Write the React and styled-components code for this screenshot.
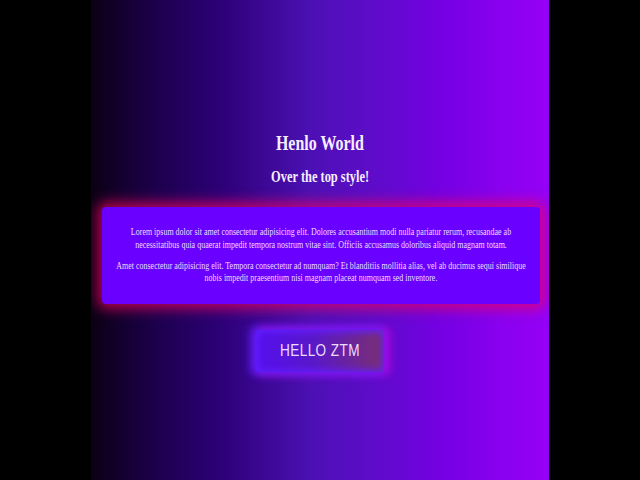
import React from 'react';
import styled, { createGlobalStyle } from 'styled-components';

const GlobalStyle = createGlobalStyle`
  html, body {
    margin: 0;
    padding: 0;
    background: #000;
  }
  body {
    font-family: "Liberation Serif", "Times New Roman", serif;
  }
`;

const Page = styled.div`
  width: 458px;
  height: 480px;
  margin: 0 auto;
  box-sizing: border-box;
  padding-top: 131px;
  background: linear-gradient(
    90deg,
    #0c0014 0%,
    #1c004c 14%,
    #2c0076 28%,
    #4c10b4 48%,
    #5e0cca 62%,
    #7400e2 76%,
    #8a00f0 90%,
    #9600f6 100%
  );
  display: flex;
  flex-direction: column;
  align-items: center;
  overflow: hidden;
`;

const Squeeze = styled.div`
  display: flex;
  justify-content: center;
  width: 100%;
`;

const Title = styled.h1`
  margin: 0;
  flex-shrink: 0;
  font-size: 21px;
  line-height: 24px;
  font-weight: 700;
  color: #f6eeff;
  white-space: nowrap;
  transform: scaleX(0.76);
`;

const Subtitle = styled.h2`
  margin: 12px 0 0;
  flex-shrink: 0;
  font-size: 17px;
  line-height: 20px;
  font-weight: 700;
  color: #f6eeff;
  white-space: nowrap;
  transform: scaleX(0.73);
`;

const Card = styled.section`
  align-self: stretch;
  margin: 20px 9px 0 11px;
  padding: 18px 0 20px;
  background: #6a00ff;
  border-radius: 4px;
  box-shadow: 0 0 13px 5px rgba(235, 0, 95, 0.72);
`;

const Text = styled.p`
  margin: 0 0 ${(p) => p.$gap || 0}px;
  flex-shrink: 0;
  width: 578px;
  font-size: 11px;
  line-height: 12.5px;
  color: #eadcff;
  text-align: center;
  transform: scaleX(0.725);
`;

const Button = styled.button`
  margin-top: 26px;
  width: 128px;
  height: 42px;
  border: none;
  border-radius: 2px;
  background: linear-gradient(90deg, #5410ee 0%, #5a18c8 45%, #7a3070 100%);
  box-shadow:
    -3px 0 8px 3px rgba(90, 30, 255, 0.85),
    3px 0 8px 3px rgba(200, 10, 220, 0.8),
    inset 0 0 6px 3px rgba(100, 30, 255, 0.8);
  color: #eadcff;
  font-family: "Liberation Sans", Arial, sans-serif;
  font-size: 17px;
  letter-spacing: 0.5px;
  cursor: pointer;
`;

const ButtonLabel = styled.span`
  display: inline-block;
  transform: scaleX(0.8);
  white-space: nowrap;
`;

function App() {
  return (
    <>
      <GlobalStyle />
      <Page>
        <Squeeze>
          <Title>Henlo World</Title>
        </Squeeze>
        <Squeeze>
          <Subtitle>Over the top style!</Subtitle>
        </Squeeze>
        <Card>
          <Squeeze>
            <Text $gap={8.5}>
              Lorem ipsum dolor sit amet consectetur adipisicing elit. Dolores accusantium modi nulla pariatur rerum, recusandae ab necessitatibus quia quaerat impedit tempora nostrum vitae sint. Officiis accusamus doloribus aliquid magnam totam.
            </Text>
          </Squeeze>
          <Squeeze>
            <Text>
              Amet consectetur adipisicing elit. Tempora consectetur ad numquam? Et blanditiis mollitia alias, vel ab ducimus sequi similique nobis impedit praesentium nisi magnam placeat numquam sed inventore.
            </Text>
          </Squeeze>
        </Card>
        <Button>
          <ButtonLabel>HELLO ZTM</ButtonLabel>
        </Button>
      </Page>
    </>
  );
}

export default App;
